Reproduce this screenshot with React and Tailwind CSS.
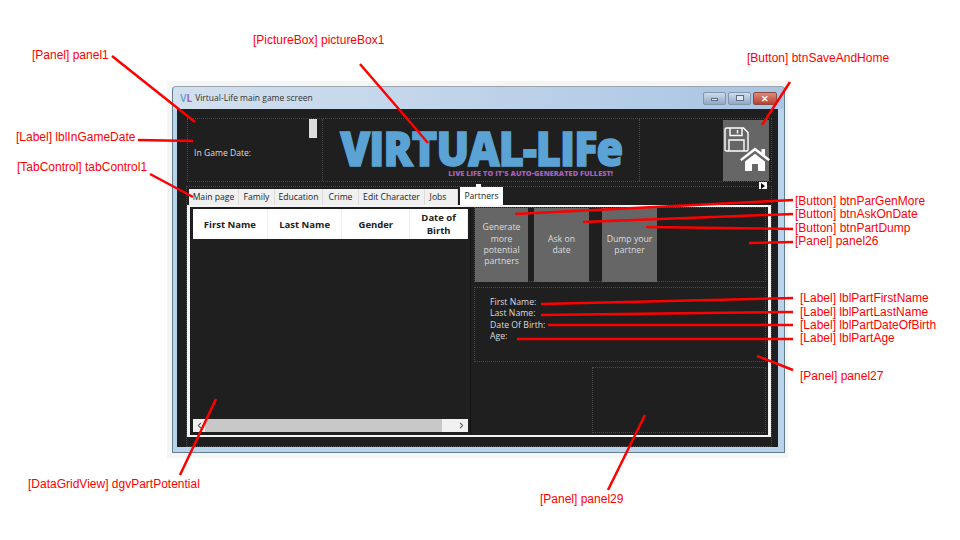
import React from 'react';
import { ChevronLeft, ChevronRight } from 'lucide-react';

const tabs = [
  { label: 'Main page', width: 'w-[50px]' },
  { label: 'Family', width: 'w-[36px]' },
  { label: 'Education', width: 'w-[48px]' },
  { label: 'Crime', width: 'w-[36px]' },
  { label: 'Edit Character', width: 'w-[66px]' },
  { label: 'Jobs', width: 'w-[33px] pr-[6px]' },
];

const columns = [
  { label: 'First Name', width: 'w-[75px]' },
  { label: 'Last Name', width: 'w-[75px]' },
  { label: 'Gender', width: 'w-[68px]' },
  { label: 'Date of Birth', width: 'w-[58px]' },
];

const notes = [
  { text: '[Panel] panel1', className: 'left-[32px] top-[48px]' },
  { text: '[PictureBox] pictureBox1', className: 'left-[253px] top-[33px]' },
  { text: '[Button] btnSaveAndHome', className: 'left-[747px] top-[51px]' },
  { text: '[Label] lblInGameDate', className: 'left-[16px] top-[130px]' },
  { text: '[TabControl] tabControl1', className: 'left-[17px] top-[160px]' },
  { text: '[Button] btnParGenMore', className: 'left-[795px] top-[194px]' },
  { text: '[Button] btnAskOnDate', className: 'left-[795px] top-[207px]' },
  { text: '[Button] btnPartDump', className: 'left-[795px] top-[221px]' },
  { text: '[Panel] panel26', className: 'left-[795px] top-[234px]' },
  { text: '[Label] lblPartFirstName', className: 'left-[800px] top-[291px]' },
  { text: '[Label] lblPartLastName', className: 'left-[800px] top-[305px]' },
  { text: '[Label] lblPartDateOfBirth', className: 'left-[800px] top-[318px]' },
  { text: '[Label] lblPartAge', className: 'left-[800px] top-[331px]' },
  { text: '[Panel] panel27', className: 'left-[800px] top-[369px]' },
  { text: '[DataGridView] dgvPartPotential', className: 'left-[28px] top-[477px]' },
  { text: '[Panel] panel29', className: 'left-[540px] top-[492px]' },
];

const lines = [
  [112, 56, 195, 122],
  [360, 64, 428, 143],
  [790, 82, 762, 125],
  [138, 140, 193, 141],
  [150, 174, 193, 197],
  [515, 214, 793, 200],
  [583, 222, 793, 214],
  [646, 227, 793, 229],
  [749, 243, 793, 242],
  [541, 304, 793, 298],
  [541, 315, 793, 312],
  [548, 325, 793, 325],
  [517, 339, 793, 339],
  [757, 356, 793, 370],
  [216, 399, 180, 475],
  [645, 415, 608, 490],
];

const FloppyIcon = () => (
  <svg width="25" height="25" viewBox="0 0 25 25" fill="none" stroke="white" strokeWidth="1.4">
    <path d="M2.5 1 H19.5 L24 5.5 V22.5 Q24 24 22.5 24 H2.5 Q1 24 1 22.5 V2.5 Q1 1 2.5 1 Z" />
    <path d="M6 1 V8.5 H18 V1" />
    <path d="M13.5 3 V6.5" />
    <path d="M5 24 V13 H20 V24" />
  </svg>
);

const HomeIcon = () => (
  <svg width="30" height="24" viewBox="0 0 30 24" fill="white">
    <path d="M15 0.5 L21.5 5.5 V2 H25 V8.3 L30 12.2 L28.4 14 L15 3.8 L1.6 14 L0 12.2 Z" />
    <path d="M5 14.5 L15 6.8 L25 14.5 V24 H18 V17 H12 V24 H5 Z" />
  </svg>
);

const ActionButton = ({ className, children }) => (
  <div className={`flex items-center justify-center h-[74px] bg-[#666666] text-center text-[#dddddd] text-[8.7px] leading-[11.4px] ${className}`}>
    {children}
  </div>
);

const GameWindow = () => (
  <div className="absolute left-[172px] top-[86px] w-[613px] h-[367px] flex flex-col bg-[#b9d3ea] border border-[#5f7f8f] border-t-[#9aa5b0] rounded-t-[4px] pl-[4px] pr-[6px] pb-[5px]">
    {/* title bar */}
    <div className="h-[22px] shrink-0 flex items-center bg-gradient-to-r from-[#d3e0ee] to-[#a9c5e3] -ml-[4px] -mr-[6px] pl-[7px] pr-[7px] rounded-t-[4px]">
      <span className="text-[10px] font-bold text-[#6fa8d8] leading-none">V<span className="text-[#a060c0]">L</span></span>
      <span className="ml-[3px] text-[8.5px] text-[#333333]">Virtual-Life main game screen</span>
      <div className="ml-auto flex gap-[2px]">
        <div className="w-[23px] h-[13px] flex items-end justify-center pb-[3px] rounded-[2px] border border-[#8296ac] bg-gradient-to-b from-[#cfdcea] to-[#8fa9c6]">
          <div className="w-[7px] h-[3px] bg-[#dfe8f2] border border-[#5b6f84]" />
        </div>
        <div className="w-[23px] h-[13px] flex items-center justify-center rounded-[2px] border border-[#8296ac] bg-gradient-to-b from-[#cfdcea] to-[#8fa9c6]">
          <div className="w-[8px] h-[6px] bg-[#dfe8f2] border border-[#5b6f84]" />
        </div>
        <div className="w-[24px] h-[13px] flex items-center justify-center rounded-[2px] border border-[#8a4a40] bg-gradient-to-b from-[#dc8a78] to-[#b8402f] text-white text-[9px] font-bold leading-none">✕</div>
      </div>
    </div>

    {/* client area */}
    <div className="flex-1 flex flex-col bg-[#1f1f1f] pl-[9px] pr-[6px] pt-[9px]">
      {/* top row */}
      <div className="h-[64px] shrink-0 flex ml-[1px] border border-dotted border-[#4a4a4a]">
        <div className="relative w-[135px] shrink-0 pl-[6px] pt-[19px] border-r border-dotted border-[#4a4a4a]">
          <span className="text-[8.6px] text-[#dddddd]">In Game Date:</span>
          <div className="absolute right-[5px] top-0 w-[8px] h-[19px] bg-[#dddddd]" />
        </div>
        <div className="w-[317px] shrink-0 flex flex-col items-center pt-[12px] border-r border-dotted border-[#4a4a4a]">
          <div className="text-[#5ba3d5] text-[47px] leading-[34px] font-extrabold tracking-[-1px] [-webkit-text-stroke:1.5px_#5ba3d5] scale-x-[0.92] whitespace-nowrap">VIRTUAL-LIFe</div>
          <div className="self-end mr-[26px] mt-[3px] text-[#a45fb8] text-[7.4px] leading-[10px] font-extrabold whitespace-nowrap">LIVE LIFE TO IT'S AUTO-GENERATED FULLEST!</div>
        </div>
        <div className="flex-1 flex justify-end items-end pr-[2px]">
          <div className="relative w-[46px] h-[61px] bg-[#666666]">
            <div className="absolute left-[1px] top-[7px]"><FloppyIcon /></div>
            <div className="absolute left-[17px] top-[27px]"><HomeIcon /></div>
          </div>
        </div>
      </div>

      {/* tab control */}
      <div className="relative mt-[4px] flex-1 flex flex-col border border-dotted border-[#4a4a4a]">
        <div className="absolute left-[289px] -top-[3px] w-[5px] h-[4px] bg-white" />
        <div className="absolute right-[4px] -top-[5px] w-[8px] h-[7px] bg-white flex items-center justify-center">
          <div className="w-0 h-0 border-y-[3px] border-y-transparent border-l-[4px] border-l-black" />
        </div>
        <div className="h-[18px] shrink-0 flex items-end pl-[2px]">
          <div className="flex h-[16px] bg-[#f0f0f0]">
            {tabs.map((tab) => (
              <div key={tab.label} className={`${tab.width} flex items-center justify-center border-r border-[#dddddd] text-[8.6px] text-[#222222] whitespace-nowrap`}>{tab.label}</div>
            ))}
          </div>
          <div className="w-[43px] h-[18px] ml-[2px] flex items-center justify-center bg-white text-[8.6px] text-[#222222]">Partners</div>
        </div>

        {/* tab page */}
        <div className="h-[232px] flex border-x-[3px] border-y-2 border-[#f4f4f4] bg-[#1f1f1f]">
          <div className="w-[281px] shrink-0 flex flex-col pt-[2px] pl-[3px] pr-[2px] pb-[3px] border-r border-[#141414]">
            <div className="h-[30px] shrink-0 flex bg-white">
              {columns.map((col) => (
                <div key={col.label} className={`${col.width} flex items-center justify-center text-center text-[9.5px] leading-[13px] font-bold text-[#222222] border-r border-[#eeeeee]`}>{col.label}</div>
              ))}
            </div>
            <div className="flex-1" />
            <div className="h-[13px] shrink-0 flex items-center bg-[#f0f0f0]">
              <div className="w-[12px] flex justify-center"><ChevronLeft size={9} color="#666666" strokeWidth={3} /></div>
              <div className="w-[237px] h-full bg-[#c8c8c8]" />
              <div className="flex-1 flex justify-end pr-[2px]"><ChevronRight size={9} color="#666666" strokeWidth={3} /></div>
            </div>
          </div>

          <div className="flex-1 flex flex-col pl-[3px] pr-[2px]">
            <div className="h-[75px] shrink-0 flex border border-dotted border-[#4a4a4a]">
              <ActionButton className="w-[53px] px-[2px]">Generate more potential partners</ActionButton>
              <ActionButton className="w-[55px] ml-[6px] px-[8px]">Ask on date</ActionButton>
              <ActionButton className="w-[55px] ml-[13px] px-[2px]">Dump your partner</ActionButton>
            </div>
            <div className="h-[75px] shrink-0 mt-[5px] pl-[15px] pt-[9px] border border-dotted border-[#4a4a4a] text-[8.7px] leading-[11.4px] text-[#dddddd]">
              <div>First Name:</div>
              <div>Last Name:</div>
              <div>Date Of Birth:</div>
              <div>Age:</div>
            </div>
            <div className="h-[66px] shrink-0 mt-[5px] ml-[118px] border border-dotted border-[#4a4a4a]" />
          </div>
        </div>
      </div>
    </div>
  </div>
);

export default function App() {
  return (
    <div className="relative w-[960px] h-[540px] overflow-hidden bg-white font-['Open_Sans',sans-serif]">
      {/* pale margin around the window capture */}
      <div className="absolute left-[167px] top-[81px] w-[621px] h-[377px] bg-[#f5f5f5]" />
      <GameWindow />
      <svg className="absolute inset-0" width="960" height="540">
        {lines.map(([x1, y1, x2, y2], i) => (
          <line key={i} x1={x1} y1={y1} x2={x2} y2={y2} stroke="#ff0000" strokeWidth="2.5" />
        ))}
      </svg>
      {notes.map((note) => (
        <div key={note.text} className={`absolute font-['Liberation_Sans',sans-serif] text-[12px] leading-[14px] text-[#ff0000] whitespace-nowrap ${note.className}`}>{note.text}</div>
      ))}
    </div>
  );
}
